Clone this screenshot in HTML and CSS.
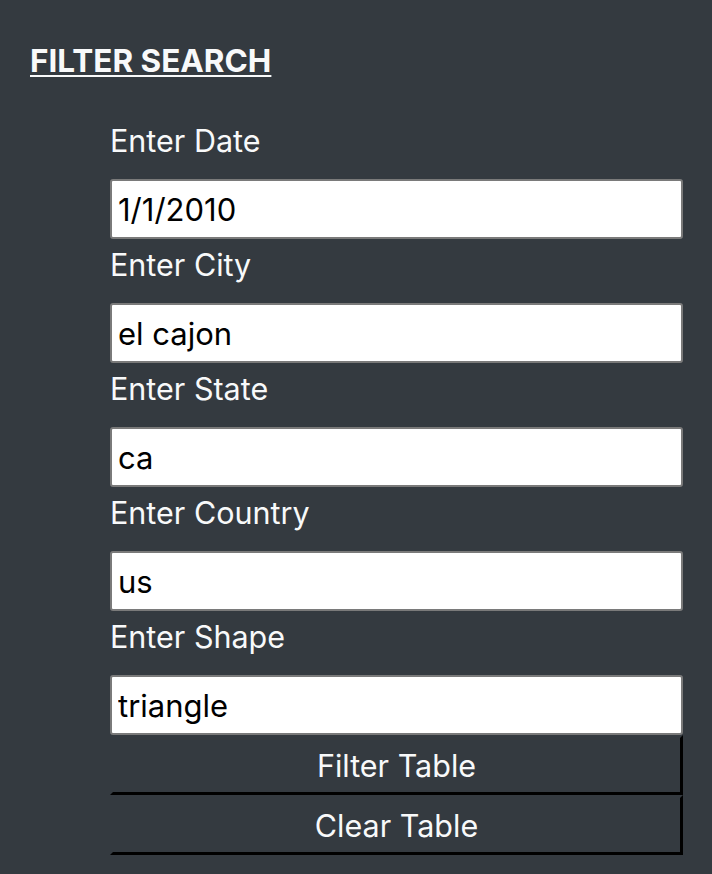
FILE: index.html
```html
<!DOCTYPE html>
<html lang="en">
<head>
<meta charset="utf-8">
<title>Filter Search</title>
<link rel="stylesheet" href="styles.css">
</head>
<body>
<div class="panel">
  <h4 class="title">FILTER SEARCH</h4>
  <form class="filters">
    <div class="field">
      <label class="field-label" for="date">Enter Date</label>
      <input class="field-input" id="date" type="text" value="1/1/2010">
    </div>
    <div class="field">
      <label class="field-label" for="city">Enter City</label>
      <input class="field-input" id="city" type="text" value="el cajon">
    </div>
    <div class="field">
      <label class="field-label" for="state">Enter State</label>
      <input class="field-input" id="state" type="text" value="ca">
    </div>
    <div class="field">
      <label class="field-label" for="country">Enter Country</label>
      <input class="field-input" id="country" type="text" value="us">
    </div>
    <div class="field">
      <label class="field-label" for="shape">Enter Shape</label>
      <input class="field-input" id="shape" type="text" value="triangle">
    </div>
    <button class="btn" type="button">Filter Table</button>
    <button class="btn" type="button">Clear Table</button>
  </form>
</div>
</body>
</html>
```
FILE: styles.css
```css
html, body {
  margin: 0;
  padding: 0;
  background: #343a40;
}

body {
  font-family: "Inter", "Liberation Sans", sans-serif;
  color: #f8f9fa;
}

.panel {
  padding: 42px 29px 18px 30px;
}

.title {
  margin: 0 0 35px;
  font-size: 31.5px;
  font-weight: 700;
  line-height: 38px;
  text-decoration: underline;
  text-decoration-thickness: 2px;
  text-underline-offset: 3px;
}

.filters {
  display: flex;
  flex-direction: column;
  margin-left: 80px;
}

.field {
  display: flex;
  flex-direction: column;
}

.field-label {
  display: block;
  padding: 7px 0 20px;
  font-size: 30.5px;
  line-height: 37px;
}

.field-input {
  box-sizing: border-box;
  width: 100%;
  height: 60px;
  margin: 0;
  padding: 0 6px;
  border: 2px solid #7a7a7a;
  border-radius: 3px;
  background: #fff;
  color: #000;
  font-family: "Inter", "Liberation Sans", sans-serif;
  font-size: 31px;
  outline: none;
}

.btn {
  box-sizing: border-box;
  width: 100%;
  height: 60px;
  margin: 0;
  padding: 3px 0 0;
  border-style: solid;
  border-width: 3px;
  border-color: #343a40 #000 #000 #343a40;
  background: #343a40;
  color: #f8f9fa;
  font-family: "Inter", "Liberation Sans", sans-serif;
  font-size: 30.5px;
  line-height: 1;
  text-align: center;
  cursor: pointer;
}
```
